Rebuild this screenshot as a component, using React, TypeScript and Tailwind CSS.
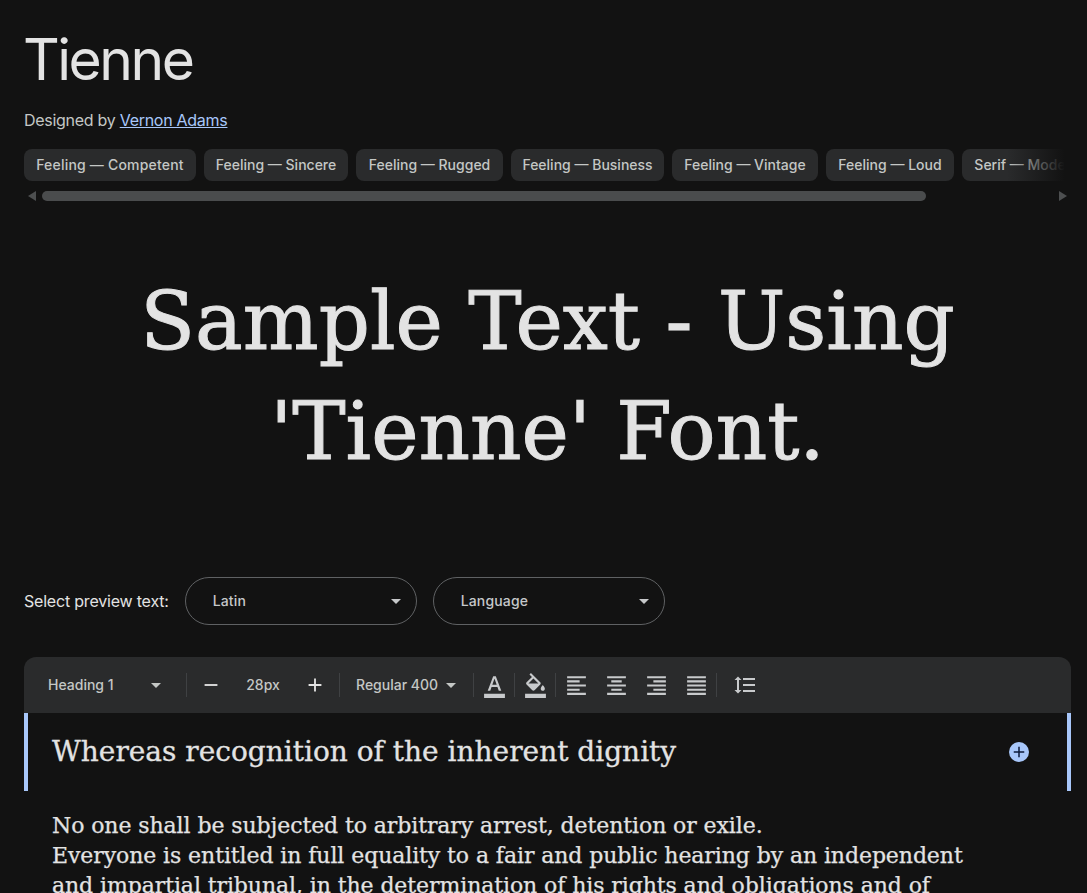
import React from "react";

const chips = [
  { label: "Feeling — Competent", size: "w-[172px] tracking-[0.2px]" },
  { label: "Feeling — Sincere", size: "w-[144px]" },
  { label: "Feeling — Rugged", size: "w-[147px]" },
  { label: "Feeling — Business", size: "w-[153px]" },
  { label: "Feeling — Vintage", size: "w-[146px]" },
  { label: "Feeling — Loud", size: "w-[128px]" },
  { label: "Serif — Modern", size: "w-[130px]" },
];

function Icon({ d, size = 24, className = "" }: { d: string; size?: number; className?: string }) {
  return (
    <svg width={size} height={size} viewBox="0 0 24 24" fill="currentColor" className={"shrink-0 " + className}>
      <path d={d} />
    </svg>
  );
}

function Caret({ className = "" }: { className?: string }) {
  return <span className={"h-0 w-0 shrink-0 border-x-[5px] border-t-[5px] border-x-transparent " + className} />;
}

function Sep({ className = "" }: { className?: string }) {
  return <span className={"h-6 w-px shrink-0 bg-[#3f4143] " + className} />;
}

function Select({ label }: { label: string }) {
  return (
    <div className="flex h-12 w-[232px] items-center justify-between rounded-3xl border border-[#5f6163] pl-[27px] pr-[15px] text-sm font-medium tracking-[0.15px] text-[#c6c8ca]">
      <span>{label}</span>
      <Caret className="border-t-[#c6c8ca]" />
    </div>
  );
}

const icons = {
  left: "M15 15H3v2h12v-2zm0-8H3v2h12V7zM3 13h18v-2H3v2zm0 8h18v-2H3v2zM3 3v2h18V3H3z",
  center: "M7 15v2h10v-2H7zm-4 6h18v-2H3v2zm0-8h18v-2H3v2zm4-6v2h10V7H7zM3 3v2h18V3H3z",
  right: "M3 21h18v-2H3v2zm6-4h12v-2H9v2zm-6-4h18v-2H3v2zm6-4h12V7H9v2zM3 3v2h18V3H3z",
  justify: "M3 21h18v-2H3v2zm0-4h18v-2H3v2zm0-4h18v-2H3v2zm0-4h18V7H3v2zm0-6v2h18V3H3z",
  spacing: "M6 7h2.5L5 3.5 1.5 7H4v10H1.5L5 20.5 8.5 17H6V7zm4-2v2h12V5H10zm0 14h12v-2H10v2zm0-6h12v-2H10v2z",
  text: "M2 20h20v4H2v-4zm3.49-3h2.42l1.27-3.58h5.65L16.09 17h2.42L13.25 3h-2.5L5.49 17zm4.42-5.61 2.03-5.79h.12l2.03 5.79H9.91z",
  fill: "M16.56 8.94 7.62 0 6.21 1.41l2.38 2.38-5.15 5.15c-.59.59-.59 1.54 0 2.12l5.5 5.5c.29.29.68.44 1.06.44s.77-.15 1.06-.44l5.5-5.5c.59-.58.59-1.53 0-2.12zM5.21 10 10 5.21 14.79 10H5.21zM19 11.5s-2 2.17-2 3.5c0 1.1.9 2 2 2s2-.9 2-2c0-1.33-2-3.5-2-3.5zM2 20h20v4H2v-4z",
  plus: "M19 13h-6v6h-2v-6H5v-2h6V5h2v6h6v2z",
  minus: "M19 13H5v-2h14v2z",
};

export default function App() {
  return (
    <div className="h-[893px] overflow-hidden bg-[#121212] pl-6 pr-4 font-['Inter',sans-serif] text-[#e3e3e3]">
      <h1 className="-ml-px pt-[22px] text-[57px] font-normal leading-[76px] tracking-[-2.5px]">Tienne</h1>
      <p className="mt-[10px] text-base leading-6 tracking-[-0.28px] text-[#c4c7c5]">
        Designed by <a className="text-[#a8c7fa] underline">Vernon Adams</a>
      </p>

      <div className="relative mt-[17px] flex gap-2 overflow-hidden">
        {chips.map((c) => (
          <span
            key={c.label}
            className={"flex h-8 shrink-0 items-center justify-center whitespace-nowrap rounded-lg bg-[#2a2b2c] text-sm font-medium text-[#c4c7c5] " + c.size}
          >
            {c.label}
          </span>
        ))}
        <span className="absolute inset-y-0 right-0 w-[64px] bg-gradient-to-r from-transparent to-[#121212] to-90%" />
      </div>

      <div className="mt-[9px] flex h-[12px] items-center justify-between">
        <span className="ml-1 h-0 w-0 shrink-0 border-y-[5px] border-r-[8px] border-y-transparent border-r-[#4d4f50]" />
        <span className="ml-[6px] mr-auto h-[10px] w-[884px] rounded-full bg-[#4a4c4d]" />
        <span className="mr-1 h-0 w-0 shrink-0 border-y-[5px] border-l-[8px] border-y-transparent border-l-[#4d4f50]" />
      </div>

      <div className="mt-[65px] h-[256px] text-center font-['DejaVu_Serif',serif] text-[80px] leading-[110px] text-[#e3e3e3] [-webkit-text-stroke:1px_#e3e3e3]">
        Sample Text - Using
        <br />
        'Tienne' Font.
      </div>

      <div className="mt-[54px] flex items-center gap-4">
        <span className="text-base tracking-[-0.2px] text-[#e3e3e3]">Select preview text:</span>
        <Select label="Latin" />
        <Select label="Language" />
      </div>

      <div className="mt-8 flex h-14 items-center rounded-t-xl bg-[#2a2b2c] pl-6 text-sm font-medium text-[#c4c7c5]">
        <span className="w-[103px] shrink-0">Heading 1</span>
        <Caret className="border-t-[#c4c7c5]" />
        <Sep className="ml-[25px]" />
        <Icon d={icons.minus} size={22} className="ml-[13px] text-[#e3e3e3]" />
        <span className="ml-6 w-[34px] shrink-0 text-center">28px</span>
        <Icon d={icons.plus} size={22} className="ml-6 text-[#e3e3e3]" />
        <Sep className="ml-[13px]" />
        <span className="ml-4 w-[82px] shrink-0 whitespace-nowrap">Regular 400</span>
        <Caret className="ml-2 border-t-[#c4c7c5]" />
        <Sep className="ml-[17px]" />
        <Icon d={icons.text} size={25} className="ml-2 text-[#c8cacc]" />
        <Sep className="ml-[7px]" />
        <Icon d={icons.fill} size={25} className="ml-2 text-[#c8cacc]" />
        <Sep className="ml-[7px]" />
        <Icon d={icons.left} size={25} className="ml-2 text-[#c8cacc]" />
        <Icon d={icons.center} size={25} className="ml-[15px] text-[#c8cacc]" />
        <Icon d={icons.right} size={25} className="ml-[15px] text-[#c8cacc]" />
        <Icon d={icons.justify} size={25} className="ml-[15px] text-[#c8cacc]" />
        <Sep className="ml-[7px]" />
        <Icon d={icons.spacing} size={24} className="ml-4 text-[#c8cacc]" />
      </div>

      <div className="flex h-[78px] items-center justify-between border-x-4 border-[#a8c7fa] pl-6 pr-[38px] font-['DejaVu_Serif',serif] text-[28px] text-[#e3e3e3]">
        <span className="[-webkit-text-stroke:0.3px_#e3e3e3]">Whereas recognition of the inherent dignity</span>
        <span className="flex h-5 w-5 items-center justify-center rounded-full bg-[#a8c7fa] text-[#0b1a3a]">
          <Icon d={icons.plus} size={18} />
        </span>
      </div>

      <div className="mt-5 pl-7 pr-[100px] font-['DejaVu_Serif',serif] text-[22px] leading-[30px] tracking-[-0.09px] text-[#e3e3e3] [-webkit-text-stroke:0.25px_#e3e3e3]">
        No one shall be subjected to arbitrary arrest, detention or exile.
        <br />
        Everyone is entitled in full equality to a fair and public hearing by an independent
        <br />
        and impartial tribunal, in the determination of his rights and obligations and of
      </div>
    </div>
  );
}
